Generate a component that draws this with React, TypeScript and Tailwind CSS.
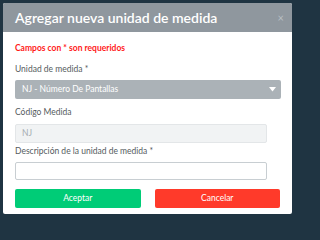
export default function App() {
  return (
    <div className="min-h-screen w-full overflow-hidden bg-[#1f3442] pl-[3px] pt-[3px] font-['Lato','Noto_Sans',sans-serif]">
      <div className="flex h-[211px] w-[289px] flex-col overflow-hidden rounded-[2px] bg-white">
        <div className="flex h-[29px] items-center justify-between bg-[#8f979e] pl-[12px] pr-[8px]">
          <h1 className="text-[14px] font-semibold leading-none text-white">Agregar nueva unidad de medida</h1>
          <span className="text-[11px] leading-none text-[#b9bfc4]">×</span>
        </div>
        <div className="flex flex-col px-[12px] pt-[11px]">
          <p className="text-[8.5px] font-bold leading-[10px] text-[#ff1a1a]">Campos con * son requeridos</p>
          <label className="mt-[11px] text-[8.5px] leading-[10px] text-[#555b60]">Unidad de medida *</label>
          <div className="mt-[6px] flex h-[19px] w-[266px] items-center justify-between rounded-[2px] bg-[#abb2b7] pl-[7px] pr-[5px]">
            <span className="text-[8.5px] text-white">NJ - Número De Pantallas</span>
            <svg width="7" height="5" viewBox="0 0 7 5">
              <path d="M0 0h7L3.5 4.5z" fill="#ffffff" />
            </svg>
          </div>
          <label className="mt-[8px] text-[8.5px] leading-[10px] text-[#555b60]">Código Medida</label>
          <div className="mt-[7px] flex h-[19px] w-[252px] items-center rounded-[2px] border border-[#e3e6e8] bg-[#f1f3f4] pl-[6px]">
            <span className="text-[8.5px] text-[#a6adb2]">NJ</span>
          </div>
          <label className="mt-[3px] text-[8.5px] leading-[10px] text-[#555b60]">Descripción de la unidad de medida *</label>
          <div className="mt-[6px] h-[18px] w-[252px] rounded-[2px] border border-[#c8ced2] bg-white" />
          <div className="mt-[9px] flex gap-[14px]">
            <button className="h-[19px] w-[126px] rounded-[2px] bg-[#00cc77] text-[8.5px] text-white">Aceptar</button>
            <button className="h-[19px] w-[126px] rounded-[2px] bg-[#ff3a2a] text-[8.5px] text-white">Cancelar</button>
          </div>
        </div>
      </div>
    </div>
  );
}
